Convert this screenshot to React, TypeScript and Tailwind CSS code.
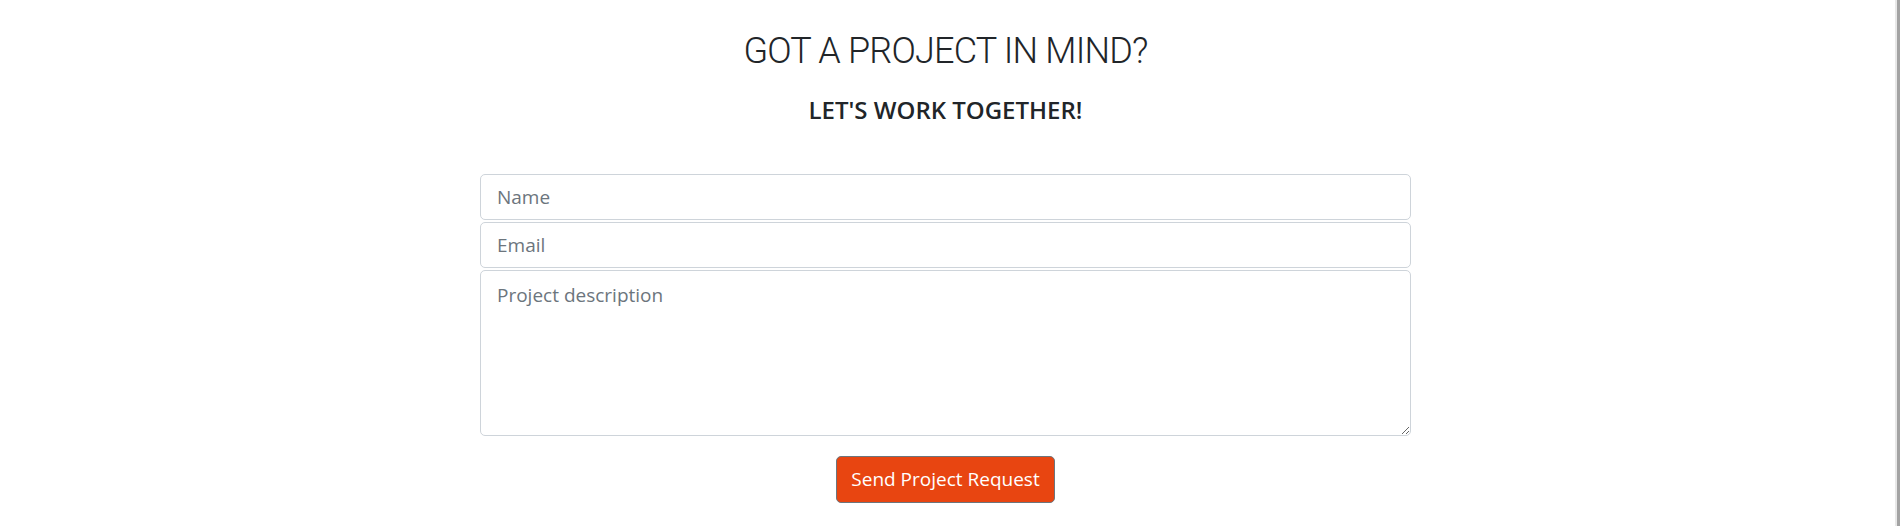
import React from "react";

export default function App() {
  return (
    <div className="flex min-h-[526px] w-full bg-white">
      <div className="flex flex-1 flex-col items-center">
        <h1
          className="mt-[33px] text-[36px] font-light leading-none tracking-[-0.8px] text-[#212529]"
          style={{ fontFamily: "Roboto, 'Liberation Sans', sans-serif" }}
        >
          GOT A PROJECT IN MIND?
        </h1>
        <h4
          className="mt-[29px] text-[24px] font-semibold leading-none text-[#212529]"
          style={{ fontFamily: "'Open Sans', 'Noto Sans', sans-serif" }}
        >
          LET'S WORK TOGETHER!
        </h4>
        <form
          className="mt-[52px] flex w-[931px] flex-col gap-[2px]"
          style={{ fontFamily: "'Open Sans', 'Noto Sans', sans-serif" }}
          onSubmit={(e) => e.preventDefault()}
        >
          <input
            type="text"
            placeholder="Name"
            className="h-[46px] w-full rounded-[5px] border border-[#ced4da] bg-white px-[16px] text-[19px] text-[#495057] placeholder:text-[#6c757d] outline-none"
          />
          <input
            type="email"
            placeholder="Email"
            className="h-[46px] w-full rounded-[5px] border border-[#ced4da] bg-white px-[16px] text-[19px] text-[#495057] placeholder:text-[#6c757d] outline-none"
          />
          <textarea
            placeholder="Project description"
            className="h-[166px] w-full rounded-[5px] border border-[#ced4da] bg-white px-[16px] py-[10px] text-[19px] text-[#495057] placeholder:text-[#6c757d] outline-none"
          />
          <div className="mt-[18px] flex justify-center">
            <button
              type="submit"
              className="h-[47px] w-[219px] rounded-[5px] border border-[#6c757d] bg-[#e84511] text-[19px] text-white"
            >
              Send Project Request
            </button>
          </div>
        </form>
      </div>
      <div className="flex w-[9px] shrink-0">
        <div className="w-[4px] bg-white" />
        <div className="w-[2px] bg-[#e8e8e8]" />
        <div className="w-[3px] bg-[#a3a3a3]" />
      </div>
    </div>
  );
}
